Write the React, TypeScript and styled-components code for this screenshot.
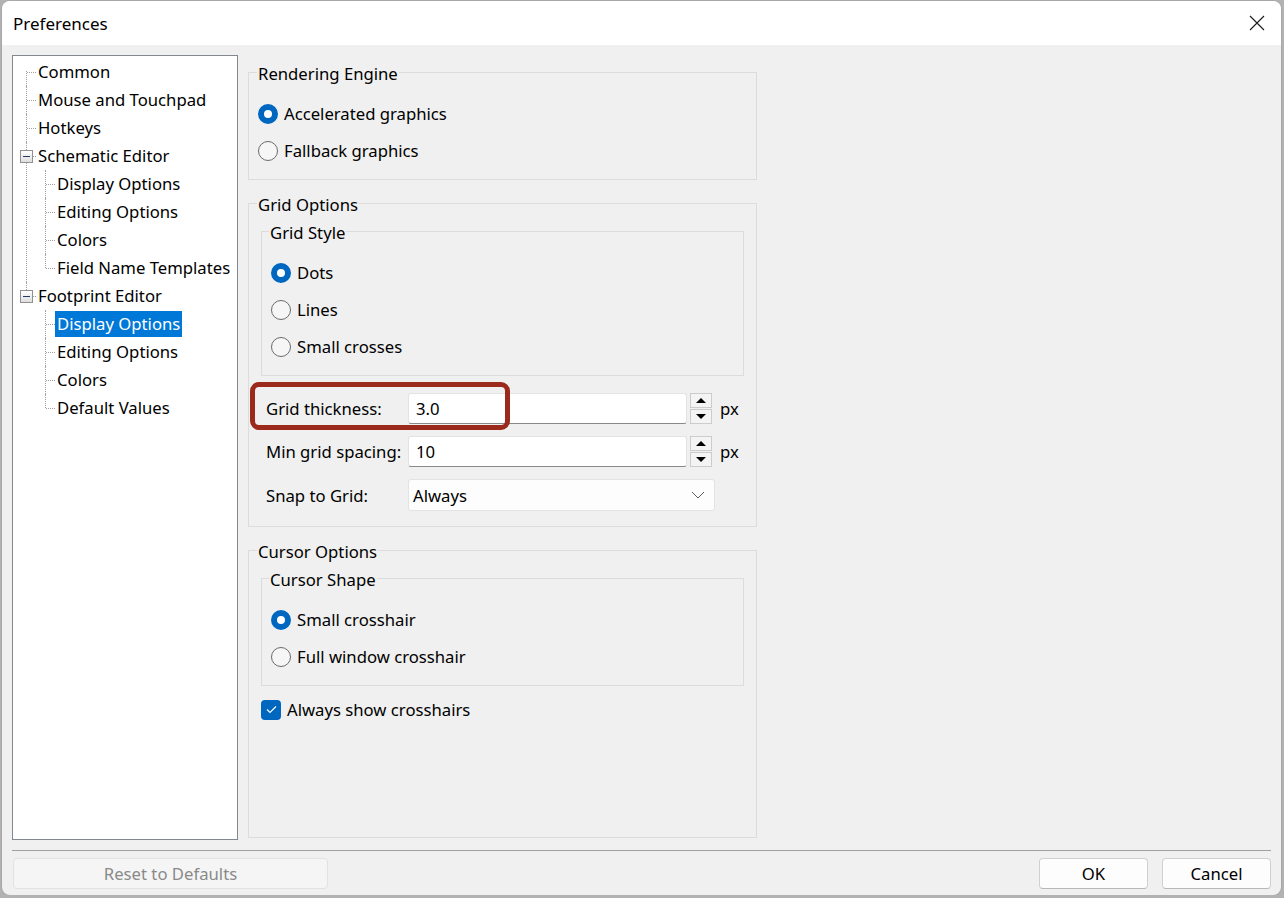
import React from 'react'
import styled, { createGlobalStyle, css } from 'styled-components'

type ITreeNode = {
  label: string,
  selected?: boolean,
  children?: ITreeNode[]
}

const treeNodes: ITreeNode[] = [
  { label: 'Common' },
  { label: 'Mouse and Touchpad' },
  { label: 'Hotkeys' },
  {
    label: 'Schematic Editor',
    children: [
      { label: 'Display Options' },
      { label: 'Editing Options' },
      { label: 'Colors' },
      { label: 'Field Name Templates' }
    ]
  },
  {
    label: 'Footprint Editor',
    children: [
      { label: 'Display Options', selected: true },
      { label: 'Editing Options' },
      { label: 'Colors' },
      { label: 'Default Values' }
    ]
  }
]

// x of the dotted guide line for each tree level, inside the tree panel
const lineX = [13, 32]
const textPad = [23, 42]

const GlobalStyle = createGlobalStyle`
  html, body {
    margin: 0;
    padding: 0;
  }
  body {
    background: #b2b2b2;
    font-family: 'Noto Sans', 'Segoe UI', sans-serif;
    font-size: 16.7px;
    color: #000;
  }
  * {
    box-sizing: border-box;
  }
`

const Radio = ({ checked, label }: { checked?: boolean, label: string }) => (
  <OptionRow>
    <RadioCircle $checked={!!checked} />
    <span>{label}</span>
  </OptionRow>
)

const Spinner = () => (
  <SpinBox>
    <SpinButton><Arrow $up /></SpinButton>
    <SpinButton><Arrow /></SpinButton>
  </SpinBox>
)

const TreeBranch = ({ nodes, level }: { nodes: ITreeNode[], level: number }) => (
  <TreeList>
    {nodes.map((node, index) => (
      <TreeItem
        key={node.label + index}
        $level={level}
        $first={index === 0}
        $last={index === nodes.length - 1}
      >
        <TreeRow $level={level}>
          {node.children && <Expander $level={level} />}
          <TreeLabel $selected={!!node.selected}>{node.label}</TreeLabel>
        </TreeRow>
        {node.children && <TreeBranch nodes={node.children} level={level + 1} />}
      </TreeItem>
    ))}
  </TreeList>
)

const App = () => {
  return (
    <>
      <GlobalStyle />
      <Window>
        <TitleBar>
          <Title>Preferences</Title>
          <CloseButton>
            <svg width="16" height="16" viewBox="0 0 16 16">
              <path d="M1 1 L15 15 M15 1 L1 15" stroke="#1a1a1a" strokeWidth="1.1" fill="none" />
            </svg>
          </CloseButton>
        </TitleBar>
        <Body>
          <Main>
            <TreePanel>
              <TreeBranch nodes={treeNodes} level={0} />
            </TreePanel>
            <SettingsPanel>
              <GroupBox $variant="plain">
                <Legend $shift={-1}>Rendering Engine</Legend>
                <Radio checked label="Accelerated graphics" />
                <Radio label="Fallback graphics" />
              </GroupBox>

              <GroupBox $variant="outer">
                <Legend $shift={-4}>Grid Options</Legend>
                <GroupBox $variant="inner">
                  <Legend $shift={-2}>Grid Style</Legend>
                  <Radio checked label="Dots" />
                  <Radio label="Lines" />
                  <Radio label="Small crosses" />
                </GroupBox>
                <FieldList>
                  <FieldRow>
                    <Highlight />
                    <FieldLabel>Grid thickness:</FieldLabel>
                    <TextInput readOnly value="3.0" />
                    <Spinner />
                    <Unit>px</Unit>
                  </FieldRow>
                  <FieldRow>
                    <FieldLabel>Min grid spacing:</FieldLabel>
                    <TextInput readOnly value="10" />
                    <Spinner />
                    <Unit>px</Unit>
                  </FieldRow>
                  <FieldRow $tall>
                    <FieldLabel>Snap to Grid:</FieldLabel>
                    <Select>
                      <span>Always</span>
                      <svg width="14" height="8" viewBox="0 0 14 8">
                        <polyline points="1,1 7,7 13,1" stroke="#5c5c5c" strokeWidth="1" fill="none" />
                      </svg>
                    </Select>
                  </FieldRow>
                </FieldList>
              </GroupBox>

              <GroupBox $variant="outer" $grow>
                <Legend $shift={-4}>Cursor Options</Legend>
                <GroupBox $variant="inner">
                  <Legend $shift={-2}>Cursor Shape</Legend>
                  <Radio checked label="Small crosshair" />
                  <Radio label="Full window crosshair" />
                </GroupBox>
                <CheckRow>
                  <CheckBox>
                    <svg width="11" height="9" viewBox="0 0 11 9">
                      <polyline points="1,4.5 4,7.5 10,1.5" stroke="#fff" strokeWidth="1.1" fill="none" />
                    </svg>
                  </CheckBox>
                  <span>Always show crosshairs</span>
                </CheckRow>
              </GroupBox>
            </SettingsPanel>
          </Main>
          <Separator />
          <ButtonBar>
            <DialogButton $width={315} disabled>Reset to Defaults</DialogButton>
            <Spacer />
            <DialogButton $width={109}>OK</DialogButton>
            <DialogButton $width={109}>Cancel</DialogButton>
          </ButtonBar>
        </Body>
      </Window>
    </>
  )
}

const Window = styled.div`
  margin: 1px 0 0 2px;
  width: 1279px;
  height: 894px;
  border-radius: 8px;
  overflow: hidden;
  display: flex;
  flex-direction: column;
  background: #f0f0f0;
  box-shadow: 0 0 0 1px #a8a8a8;
`

const TitleBar = styled.div`
  height: 44px;
  flex: none;
  background: #ffffff;
  display: flex;
  align-items: center;
  justify-content: space-between;
  padding: 0 16px 0 11px;
`

const Title = styled.span`
  font-size: 17px;
`

const CloseButton = styled.div`
  display: flex;
  align-items: center;
`

const Body = styled.div`
  flex: 1;
  display: flex;
  flex-direction: column;
  padding: 10px 10px 6px 10px;
  min-height: 0;
`

const Main = styled.div`
  flex: 1;
  display: flex;
  gap: 10px;
  min-height: 0;
`

const TreePanel = styled.div`
  width: 226px;
  flex: none;
  background: #ffffff;
  border: 1px solid #828790;
  padding-top: 2px;
`

const TreeList = styled.ul`
  list-style: none;
  margin: 0;
  padding: 0;
`

type TreeItemProps = {
  $level: number,
  $first: boolean,
  $last: boolean
}

const TreeItem = styled.li<TreeItemProps>`
  position: relative;

  &::before {
    content: '';
    position: absolute;
    left: ${({ $level }) => lineX[$level]}px;
    top: ${({ $level, $first }) => ($level === 0 && $first ? 13 : 0)}px;
    border-left: 1px dotted #a0a0a0;
    ${({ $last, $level, $first }) => $last
      ? css`height: ${$level === 0 && $first ? 1 : 14}px;`
      : css`bottom: 0;`}
  }
`

const TreeRow = styled.div<{ $level: number }>`
  position: relative;
  height: 28px;
  display: flex;
  align-items: center;
  padding-left: ${({ $level }) => textPad[$level]}px;

  &::before {
    content: '';
    position: absolute;
    top: 14px;
    left: ${({ $level }) => lineX[$level] + 1}px;
    width: ${({ $level }) => textPad[$level] - lineX[$level] - 1}px;
    border-top: 1px dotted #a0a0a0;
  }
`

const Expander = styled.span<{ $level: number }>`
  position: absolute;
  z-index: 1;
  left: ${({ $level }) => lineX[$level] - 6}px;
  top: 8px;
  width: 13px;
  height: 13px;
  border: 1px solid #919191;
  background: linear-gradient(#ffffff, #dedede);

  &::after {
    content: '';
    position: absolute;
    left: 2px;
    right: 2px;
    top: 5px;
    height: 1px;
    background: #22386a;
  }
`

const TreeLabel = styled.span<{ $selected: boolean }>`
  padding: 0 2px;
  line-height: 26px;
  white-space: nowrap;

  ${({ $selected }) => $selected && css`
    background: #0078d7;
    color: #ffffff;
  `}
`

const SettingsPanel = styled.div`
  width: 509px;
  flex: none;
  display: flex;
  flex-direction: column;
  gap: 11px;
  padding: 5px 0 2px 0;
`

type GroupBoxProps = {
  $variant: 'plain' | 'outer' | 'inner',
  $grow?: boolean
}

const GroupBox = styled.fieldset<GroupBoxProps>`
  margin: 0;
  min-width: 0;
  border: 1px solid #dcdcdc;
  display: flex;
  flex-direction: column;

  ${({ $variant }) => $variant === 'plain' && css`
    padding: 11px 12px 10px 9px;
  `}
  ${({ $variant }) => $variant === 'outer' && css`
    padding: 4px 12px 15px 12px;
  `}
  ${({ $variant }) => $variant === 'inner' && css`
    padding: 11px 12px 10px 9px;
  `}
  ${({ $grow }) => $grow && css`
    flex: 1;
  `}
`

const Legend = styled.legend<{ $shift: number }>`
  padding: 3px 1px 0 1px;
  margin-left: ${({ $shift }) => $shift}px;
  line-height: 21px;
`

const OptionRow = styled.div`
  height: 37px;
  display: flex;
  align-items: center;
  gap: 6px;
`

const RadioCircle = styled.span<{ $checked: boolean }>`
  width: 20px;
  height: 20px;
  border-radius: 50%;
  flex: none;
  border: 1px solid #6b6b6b;
  background: #f6f6f6;

  ${({ $checked }) => $checked && css`
    border: 6px solid #0067c0;
    background: #ffffff;
  `}
`

const FieldList = styled.div`
  display: flex;
  flex-direction: column;
  gap: 12px;
  margin-top: 17px;
`

const FieldRow = styled.div<{ $tall?: boolean }>`
  position: relative;
  height: ${({ $tall }) => ($tall ? 32 : 31)}px;
  display: flex;
  align-items: center;
  padding-left: 5px;
`

const Highlight = styled.div`
  position: absolute;
  left: -11px;
  top: -11px;
  width: 260px;
  height: 48px;
  border: 5px solid #9b2a1c;
  border-radius: 9px;
  pointer-events: none;
  z-index: 2;
`

const FieldLabel = styled.span`
  width: 142px;
  flex: none;
`

const TextInput = styled.input`
  width: 279px;
  height: 31px;
  flex: none;
  border: 1px solid #e3e3e3;
  border-bottom-color: #8a8a8a;
  border-radius: 3px;
  background: #ffffff;
  padding: 0 7px;
  font: inherit;
  color: #000;
  outline: none;
`

const SpinBox = styled.div`
  display: flex;
  flex-direction: column;
  gap: 1px;
  margin-left: 3px;
`

const SpinButton = styled.div`
  width: 22px;
  height: 15px;
  border: 1px solid #cccccc;
  background: #f4f4f4;
  display: flex;
  align-items: center;
  justify-content: center;
`

const Arrow = styled.span<{ $up?: boolean }>`
  width: 0;
  height: 0;
  border-left: 5px solid transparent;
  border-right: 5px solid transparent;
  ${({ $up }) => $up
    ? css`border-bottom: 5px solid #000;`
    : css`border-top: 5px solid #000;`}
`

const Unit = styled.span`
  margin-left: 8px;
`

const Select = styled.div`
  width: 307px;
  height: 32px;
  border: 1px solid #e3e3e3;
  border-radius: 3px;
  background: #fdfdfd;
  display: flex;
  align-items: center;
  justify-content: space-between;
  padding: 0 9px 0 4px;
`

const CheckRow = styled.div`
  height: 37px;
  margin-top: 5px;
  display: flex;
  align-items: center;
  gap: 6px;
`

const CheckBox = styled.span`
  width: 20px;
  height: 20px;
  border-radius: 4px;
  background: #0067c0;
  display: flex;
  align-items: center;
  justify-content: center;
`

const Separator = styled.div`
  height: 1px;
  margin: 10px 0 0 0;
  background: #a0a0a0;
`

const ButtonBar = styled.div`
  display: flex;
  align-items: center;
  gap: 13px;
  margin-top: 7px;
`

const Spacer = styled.div`
  flex: 1;
`

const DialogButton = styled.button<{ $width: number }>`
  width: ${({ $width }) => $width}px;
  height: 31px;
  margin-left: 1px;
  border: 1px solid #d0d0d0;
  border-bottom-color: #b8b8b8;
  border-radius: 4px;
  background: #fdfdfd;
  font: inherit;
  color: #000;

  &:disabled {
    background: #f5f5f5;
    border-color: #e2e2e2;
    color: #8a8a8a;
  }
`

export default App
